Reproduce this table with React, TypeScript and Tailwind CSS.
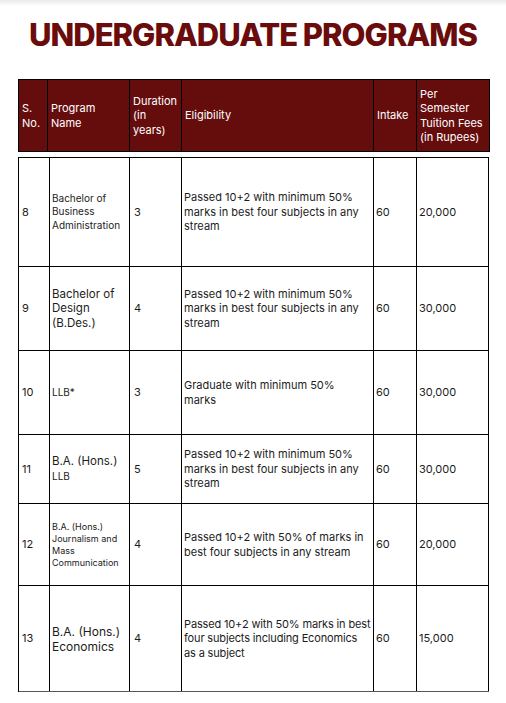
import React from "react";

type Row = {
  no: string;
  name: React.ReactNode;
  nameCls: string;
  dur: string;
  elig: React.ReactNode;
  eligCls?: string;
  intake: string;
  fee: string;
  h: string;
};

const rows: Row[] = [
  {
    no: "8",
    name: (
      <>
        Bachelor of
        <br />
        Business
        <br />
        Administration
      </>
    ),
    nameCls: "text-[10px] leading-[13.5px]",
    dur: "3",
    elig: (
      <>
        Passed 10+2 with minimum 50%
        <br />
        marks in best four subjects in any
        <br />
        stream
      </>
    ),
    intake: "60",
    fee: "20,000",
    h: "h-[109px]",
  },
  {
    no: "9",
    name: (
      <>
        Bachelor of
        <br />
        Design
        <br />
        (B.Des.)
      </>
    ),
    nameCls: "text-[11.5px] leading-[14.5px]",
    dur: "4",
    elig: (
      <>
        Passed 10+2 with minimum 50%
        <br />
        marks in best four subjects in any
        <br />
        stream
      </>
    ),
    intake: "60",
    fee: "30,000",
    h: "h-[84px]",
  },
  {
    no: "10",
    name: <>LLB*</>,
    nameCls: "text-[10px] leading-[13px]",
    dur: "3",
    elig: (
      <>
        Graduate with minimum 50%
        <br />
        marks
      </>
    ),
    intake: "60",
    fee: "30,000",
    h: "h-[84px]",
  },
  {
    no: "11",
    name: (
      <>
        <span className="text-[11.5px]">B.A. (Hons.)</span>
        <br />
        <span className="text-[10px]">LLB</span>
      </>
    ),
    nameCls: "text-[10px] leading-[15px]",
    dur: "5",
    elig: (
      <>
        Passed 10+2 with minimum 50%
        <br />
        marks in best four subjects in any
        <br />
        stream
      </>
    ),
    intake: "60",
    fee: "30,000",
    h: "h-[69px]",
  },
  {
    no: "12",
    name: (
      <>
        B.A. (Hons.)
        <br />
        Journalism and
        <br />
        Mass
        <br />
        Communication
      </>
    ),
    nameCls: "text-[9px] leading-[12px]",
    dur: "4",
    elig: (
      <>
        Passed 10+2 with 50% of marks in
        <br />
        best four subjects in any stream
      </>
    ),
    intake: "60",
    fee: "20,000",
    h: "h-[82px]",
  },
  {
    no: "13",
    name: (
      <>
        B.A. (Hons.)
        <br />
        Economics
      </>
    ),
    nameCls: "text-[12px] leading-[15px]",
    dur: "4",
    elig: (
      <>
        Passed 10+2 with 50% marks in best
        <br />
        four subjects including Economics
        <br />
        as a subject
      </>
    ),
    eligCls: "tracking-[-0.15px]",
    intake: "60",
    fee: "15,000",
    h: "h-[106px]",
  },
];

const headCell = "flex items-center pl-[3px] border-r border-black";
const bodyCell = "flex items-center pl-[2px] border-r border-black";

export default function App() {
  return (
    <div className="w-[506px] h-[703px] bg-white overflow-hidden font-['Inter',sans-serif] text-[#1c1c1c]">
      <div className="h-[6px] bg-gradient-to-b from-[#e9e9e9] to-white" />

      {/* Title */}
      <h1 className="mt-[10px] text-center text-[31px] leading-[38px] font-extrabold tracking-[-1px] text-[#6a0c0c]">
        UNDERGRADUATE PROGRAMS
      </h1>

      {/* Header */}
      <div className="ml-[18px] mt-[25px] w-[472px] grid grid-cols-[29px_82px_52px_192px_43px_73px] border-l border-t border-b border-black bg-[#650d0d] text-white text-[11px] leading-[14.5px] h-[73px]">
        <div className={headCell}>
          S.
          <br />
          No.
        </div>
        <div className={headCell}>
          Program
          <br />
          Name
        </div>
        <div className={headCell}>
          Duration
          <br />
          (in
          <br />
          years)
        </div>
        <div className={headCell}>Eligibility</div>
        <div className={`${headCell} pl-[2px]`}>Intake</div>
        <div className={`${headCell} pl-[2px] whitespace-nowrap`}>
          Per
          <br />
          Semester
          <br />
          Tuition Fees
          <br />
          (in Rupees)
        </div>
      </div>

      {/* Body */}
      <div className="ml-[18px] mt-[5px] w-[471px] border-l border-t border-black text-[11px] leading-[14.5px]">
        {rows.map((r, i) => (
          <div
            key={r.no}
            className={`grid grid-cols-[31px_80px_52px_192px_43px_72px] border-b ${
              i === rows.length - 1 ? "border-[#555]" : "border-black"
            } ${r.h}`}
          >
            <div className={`${bodyCell} pl-[3px] border-[#444]`}>{r.no}</div>
            <div className={bodyCell}>
              <div className={`whitespace-nowrap ${r.nameCls}`}>{r.name}</div>
            </div>
            <div className={`${bodyCell} pl-[4px]`}>{r.dur}</div>
            <div className={`${bodyCell} pl-[1px] overflow-hidden`}>
              <div className={`whitespace-nowrap ${r.eligCls ?? ""}`}>{r.elig}</div>
            </div>
            <div className={bodyCell}>{r.intake}</div>
            <div className={`${bodyCell} pl-[1px]`}>{r.fee}</div>
          </div>
        ))}
      </div>
    </div>
  );
}
